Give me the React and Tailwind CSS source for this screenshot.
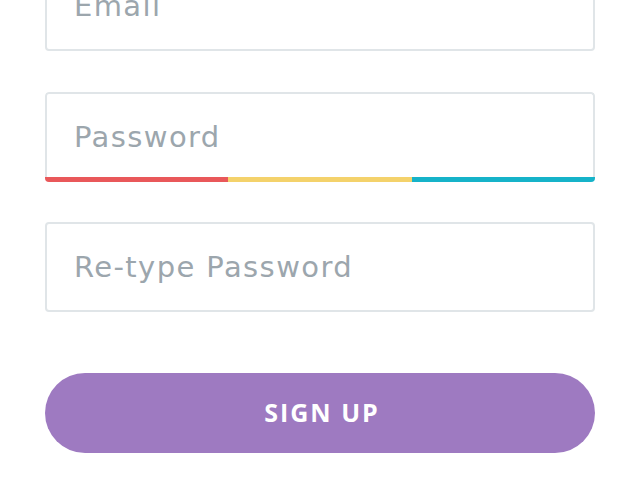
import React from 'react'

const FIELD_FONT = "font-['DejaVu_Sans',sans-serif]"
const BTN_FONT = "font-['Open_Sans',sans-serif]"

function Field({ placeholder, type = 'text', strength = false }) {
  const base = `block w-full px-[27px] bg-white border-2 border-[#e0e5e8] text-[29px] tracking-[1.4px] text-[#5d6870] placeholder:text-[#9ca6ad] outline-none ${FIELD_FONT}`
  if (strength) {
    return (
      <div className="rounded-[4px] overflow-hidden">
        <input
          type={type}
          placeholder={placeholder}
          className={`${base} h-[85px] pt-[2px] border-b-0 rounded-t-[4px]`}
        />
        <div className="flex h-[5px]">
          <div className="flex-1 bg-[#e9585a]" />
          <div className="flex-1 bg-[#f4d26b]" />
          <div className="flex-1 bg-[#16b3c9]" />
        </div>
      </div>
    )
  }
  return <input type={type} placeholder={placeholder} className={`${base} h-[90px] rounded-[4px]`} />
}

export default function App() {
  return (
    <div className="w-[640px] h-[500px] overflow-hidden bg-white">
      <form className="px-[45px] -mt-[39px] flex flex-col" onSubmit={e => e.preventDefault()}>
        <Field placeholder="Email" type="email" />
        <div className="mt-[41px]">
          <Field placeholder="Password" type="password" strength />
        </div>
        <div className="mt-[40px]">
          <Field placeholder="Re-type Password" type="password" />
        </div>
        <button
          type="submit"
          className={`mt-[61px] h-[80px] w-full rounded-full bg-[#9e7ac1] text-white text-[25px] font-bold tracking-[2px] pl-[4px] ${BTN_FONT}`}
        >
          SIGN UP
        </button>
      </form>
    </div>
  )
}
